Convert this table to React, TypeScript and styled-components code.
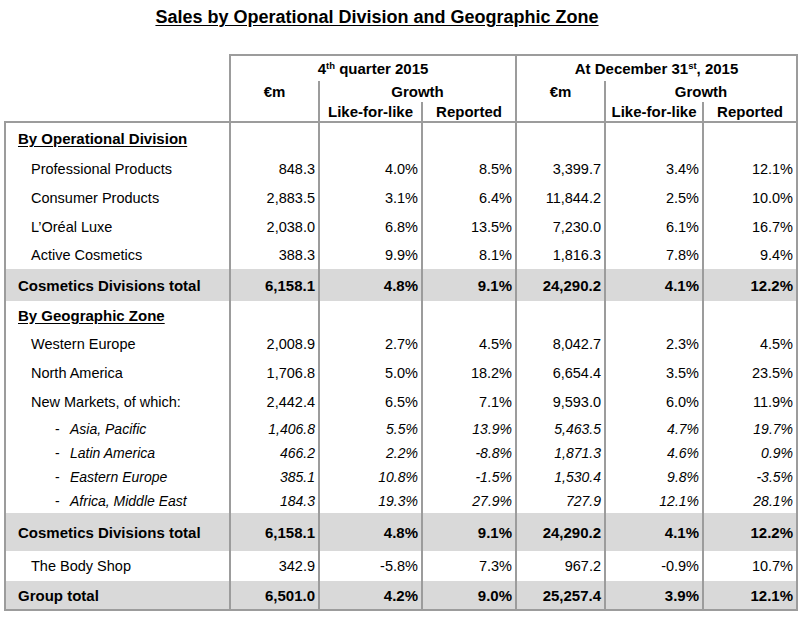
import React from "react";
import styled, { createGlobalStyle, css } from "styled-components";

const Global = createGlobalStyle`
  html, body { margin: 0; padding: 0; background: #fff; }
  body { font-family: "Liberation Sans", Arial, sans-serif; color: #000; }
`;

const LINE = "2px solid #9c9c9c";

const Page = styled.div`
  width: 800px;
  height: 630px;
  padding: 7px 0 0 4px;
  box-sizing: border-box;
  overflow: hidden;
`;

const Title = styled.h1`
  margin: 0;
  width: 746px;
  text-align: center;
  font-size: 18px;
  line-height: 20px;
  font-weight: bold;
  text-decoration: underline;
  text-underline-offset: 2px;
  height: 47px;
`;

const Table = styled.table`
  border-collapse: collapse;
  table-layout: fixed;
  width: 794px;
  font-size: 14.5px;
`;

type Side = { $l?: boolean; $r?: boolean; $t?: boolean };

const HeadCell = styled.th<Side & { $top?: boolean }>`
  padding: 0;
  font-weight: bold;
  font-size: 15px;
  line-height: 16px;
  text-align: center;
  white-space: nowrap;
  vertical-align: ${(p) => (p.$top ? "top" : "middle")};
  padding-top: ${(p) => (p.$top ? "3px" : "0")};
  border-left: ${(p) => (p.$l ? LINE : "none")};
  border-right: ${(p) => (p.$r ? LINE : "none")};
  border-top: ${(p) => (p.$t ? LINE : "none")};
`;

const HeadRow = styled.tr<{ $h: number }>`
  height: ${(p) => p.$h}px;
`;

const Sup = styled.sup`
  font-size: 9.5px;
  line-height: 0;
  vertical-align: 5px;
`;

type Kind = "section" | "item" | "sub" | "total";

const Row = styled.tr<{ $h: number; $shade?: boolean }>`
  height: ${(p) => p.$h}px;
  background: ${(p) => (p.$shade ? "#d9d9d9" : "#fff")};
`;

const cellBase = css<{ $first?: boolean; $last?: boolean }>`
  padding: 0;
  border-left: ${LINE};
  border-right: ${LINE};
  border-top: ${(p) => (p.$first ? LINE : "none")};
  border-bottom: ${(p) => (p.$last ? LINE : "none")};
  vertical-align: middle;
  white-space: nowrap;
`;

const kindFont = (k: Kind) => {
  switch (k) {
    case "section":
    case "total":
      return css`font-weight: bold; font-size: 15px;`;
    case "sub":
      return css`font-style: italic; font-size: 14px;`;
    default:
      return css`font-size: 14.5px;`;
  }
};

const LabelCell = styled.td<{ $kind: Kind; $first?: boolean; $last?: boolean }>`
  ${cellBase};
  ${(p) => kindFont(p.$kind)};
  text-align: left;
  padding-left: ${(p) =>
    p.$kind === "item" ? "25px" : p.$kind === "sub" ? "49px" : "12px"};
  text-decoration: ${(p) => (p.$kind === "section" ? "underline" : "none")};
  text-underline-offset: 2px;
`;

const NumCell = styled.td<{ $kind: Kind; $first?: boolean; $last?: boolean }>`
  ${cellBase};
  ${(p) => kindFont(p.$kind)};
  text-align: right;
  padding-right: 3px;
`;

const Dash = styled.span`
  display: inline-block;
  width: 15px;
  font-style: normal;
`;

type RowData = { kind: Kind; label: string; h: number; v?: string[] };

const rows: RowData[] = [
  { kind: "section", label: "By Operational Division", h: 32 },
  { kind: "item", label: "Professional Products", h: 29, v: ["848.3", "4.0%", "8.5%", "3,399.7", "3.4%", "12.1%"] },
  { kind: "item", label: "Consumer Products", h: 29, v: ["2,883.5", "3.1%", "6.4%", "11,844.2", "2.5%", "10.0%"] },
  { kind: "item", label: "L’Oréal Luxe", h: 29, v: ["2,038.0", "6.8%", "13.5%", "7,230.0", "6.1%", "16.7%"] },
  { kind: "item", label: "Active Cosmetics", h: 28, v: ["388.3", "9.9%", "8.1%", "1,816.3", "7.8%", "9.4%"] },
  { kind: "total", label: "Cosmetics Divisions total", h: 32, v: ["6,158.1", "4.8%", "9.1%", "24,290.2", "4.1%", "12.2%"] },
  { kind: "section", label: "By Geographic Zone", h: 28 },
  { kind: "item", label: "Western Europe", h: 29, v: ["2,008.9", "2.7%", "4.5%", "8,042.7", "2.3%", "4.5%"] },
  { kind: "item", label: "North America", h: 29, v: ["1,706.8", "5.0%", "18.2%", "6,654.4", "3.5%", "23.5%"] },
  { kind: "item", label: "New Markets, of which:", h: 29, v: ["2,442.4", "6.5%", "7.1%", "9,593.0", "6.0%", "11.9%"] },
  { kind: "sub", label: "Asia, Pacific", h: 25, v: ["1,406.8", "5.5%", "13.9%", "5,463.5", "4.7%", "19.7%"] },
  { kind: "sub", label: "Latin America", h: 24, v: ["466.2", "2.2%", "-8.8%", "1,871.3", "4.6%", "0.9%"] },
  { kind: "sub", label: "Eastern Europe", h: 24, v: ["385.1", "10.8%", "-1.5%", "1,530.4", "9.8%", "-3.5%"] },
  { kind: "sub", label: "Africa, Middle East", h: 24, v: ["184.3", "19.3%", "27.9%", "727.9", "12.1%", "28.1%"] },
  { kind: "total", label: "Cosmetics Divisions total", h: 38, v: ["6,158.1", "4.8%", "9.1%", "24,290.2", "4.1%", "12.2%"] },
  { kind: "item", label: "The Body Shop", h: 30, v: ["342.9", "-5.8%", "7.3%", "967.2", "-0.9%", "10.7%"] },
  { kind: "total", label: "Group total", h: 29, v: ["6,501.0", "4.2%", "9.0%", "25,257.4", "3.9%", "12.1%"] },
];

const widths = [225, 89, 103, 94, 89, 98, 94];

export default function App() {
  return (
    <>
      <Global />
      <Page>
        <Title>Sales by Operational Division and Geographic Zone</Title>
        <Table>
          <colgroup>
            {widths.map((w, i) => (
              <col key={i} style={{ width: w }} />
            ))}
          </colgroup>
          <thead>
            <HeadRow $h={26}>
              <HeadCell rowSpan={3} />
              <HeadCell colSpan={3} $l $r $t>
                4<Sup>th</Sup> quarter 2015
              </HeadCell>
              <HeadCell colSpan={3} $l $r $t>
                At December 31<Sup>st</Sup>, 2015
              </HeadCell>
            </HeadRow>
            <HeadRow $h={21}>
              <HeadCell rowSpan={2} $l $top>
                €m
              </HeadCell>
              <HeadCell colSpan={2} $l $r>
                Growth
              </HeadCell>
              <HeadCell rowSpan={2} $l $top>
                €m
              </HeadCell>
              <HeadCell colSpan={2} $l $r>
                Growth
              </HeadCell>
            </HeadRow>
            <HeadRow $h={20}>
              <HeadCell $l>Like-for-like</HeadCell>
              <HeadCell $l $r>Reported</HeadCell>
              <HeadCell $l>Like-for-like</HeadCell>
              <HeadCell $l $r>Reported</HeadCell>
            </HeadRow>
          </thead>
          <tbody>
            {rows.map((r, i) => {
              const first = i === 0;
              const last = i === rows.length - 1;
              return (
                <Row key={i} $h={r.h} $shade={r.kind === "total"}>
                  <LabelCell $kind={r.kind} $first={first} $last={last}>
                    {r.kind === "sub" && <Dash>-</Dash>}
                    {r.label}
                  </LabelCell>
                  {(r.v ?? ["", "", "", "", "", ""]).map((val, j) => (
                    <NumCell key={j} $kind={r.kind} $first={first} $last={last}>
                      {val}
                    </NumCell>
                  ))}
                </Row>
              );
            })}
          </tbody>
        </Table>
      </Page>
    </>
  );
}
